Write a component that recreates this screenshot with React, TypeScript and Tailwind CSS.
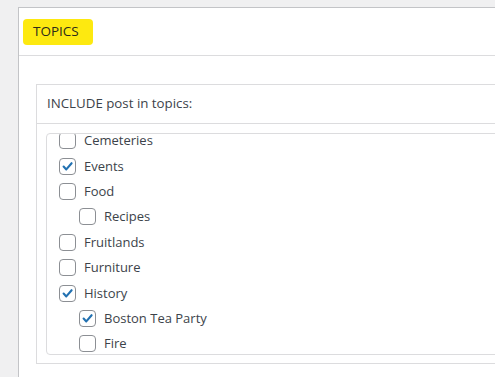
import { useEffect, useRef } from "react";

type Topic = {
  name: string;
  checked: boolean;
  child?: boolean;
};

const topics: Topic[] = [
  { name: "Cemeteries", checked: false },
  { name: "Events", checked: true },
  { name: "Food", checked: false },
  { name: "Recipes", checked: false, child: true },
  { name: "Fruitlands", checked: false },
  { name: "Furniture", checked: false },
  { name: "History", checked: true },
  { name: "Boston Tea Party", checked: true, child: true },
  { name: "Fire", checked: false, child: true },
];

const Checkbox = ({ checked }: { checked: boolean }) => (
  <span className="flex h-[17px] w-[17px] shrink-0 items-center justify-center rounded-[4px] border border-[#8c8f94] bg-white">
    {checked && (
      <svg width="13" height="13" viewBox="0 0 13 13" fill="none">
        <path
          d="M2.6 6.6 L5.3 9.4 L10.6 3.2"
          stroke="#2271b1"
          strokeWidth="2.1"
          strokeLinecap="round"
          strokeLinejoin="round"
        />
      </svg>
    )}
  </span>
);

const App = () => {
  const listRef = useRef<HTMLDivElement>(null);

  useEffect(() => {
    if (listRef.current) listRef.current.scrollTop = 6;
  }, []);

  return (
    <div
      className="h-[377px] w-[495px] overflow-hidden bg-[#f0f0f1] pl-[18px] pt-[7px] text-[13px] text-[#3c434a]"
      style={{ fontFamily: '"Open Sans", "Noto Sans", sans-serif' }}
    >
      <div className="h-[420px] w-[560px] border border-[#c3c4c7] bg-white">
        <div className="flex h-[48px] items-center border-b border-[#dcdcde] pl-[4px]">
          <span className="flex h-[26px] items-center rounded-[4px] bg-[#fde910] pl-[10px] pr-[14px] text-[13.5px] text-[#2c2c1a]">
            TOPICS
          </span>
        </div>
        <div className="pl-[17px] pt-[28px]">
          <div className="border border-[#dcdcde] pb-[8px]">
            <div className="flex h-[39px] items-center border-b border-[#dcdcde] pl-[10px] text-[13.3px]">
              INCLUDE post in topics:
            </div>
            <div
              ref={listRef}
              className="ml-[9px] mt-[9px] h-[222px] overflow-y-auto rounded-[4px] border border-[#dcdcde] pl-[12px]"
            >
              {topics.map((t) => (
                <label
                  key={t.name}
                  className={`flex h-[25.4px] items-center gap-[8px] ${t.child ? "pl-[20px]" : ""}`}
                >
                  <Checkbox checked={t.checked} />
                  <span className="leading-none">{t.name}</span>
                </label>
              ))}
            </div>
          </div>
        </div>
      </div>
    </div>
  );
};

export default App;
